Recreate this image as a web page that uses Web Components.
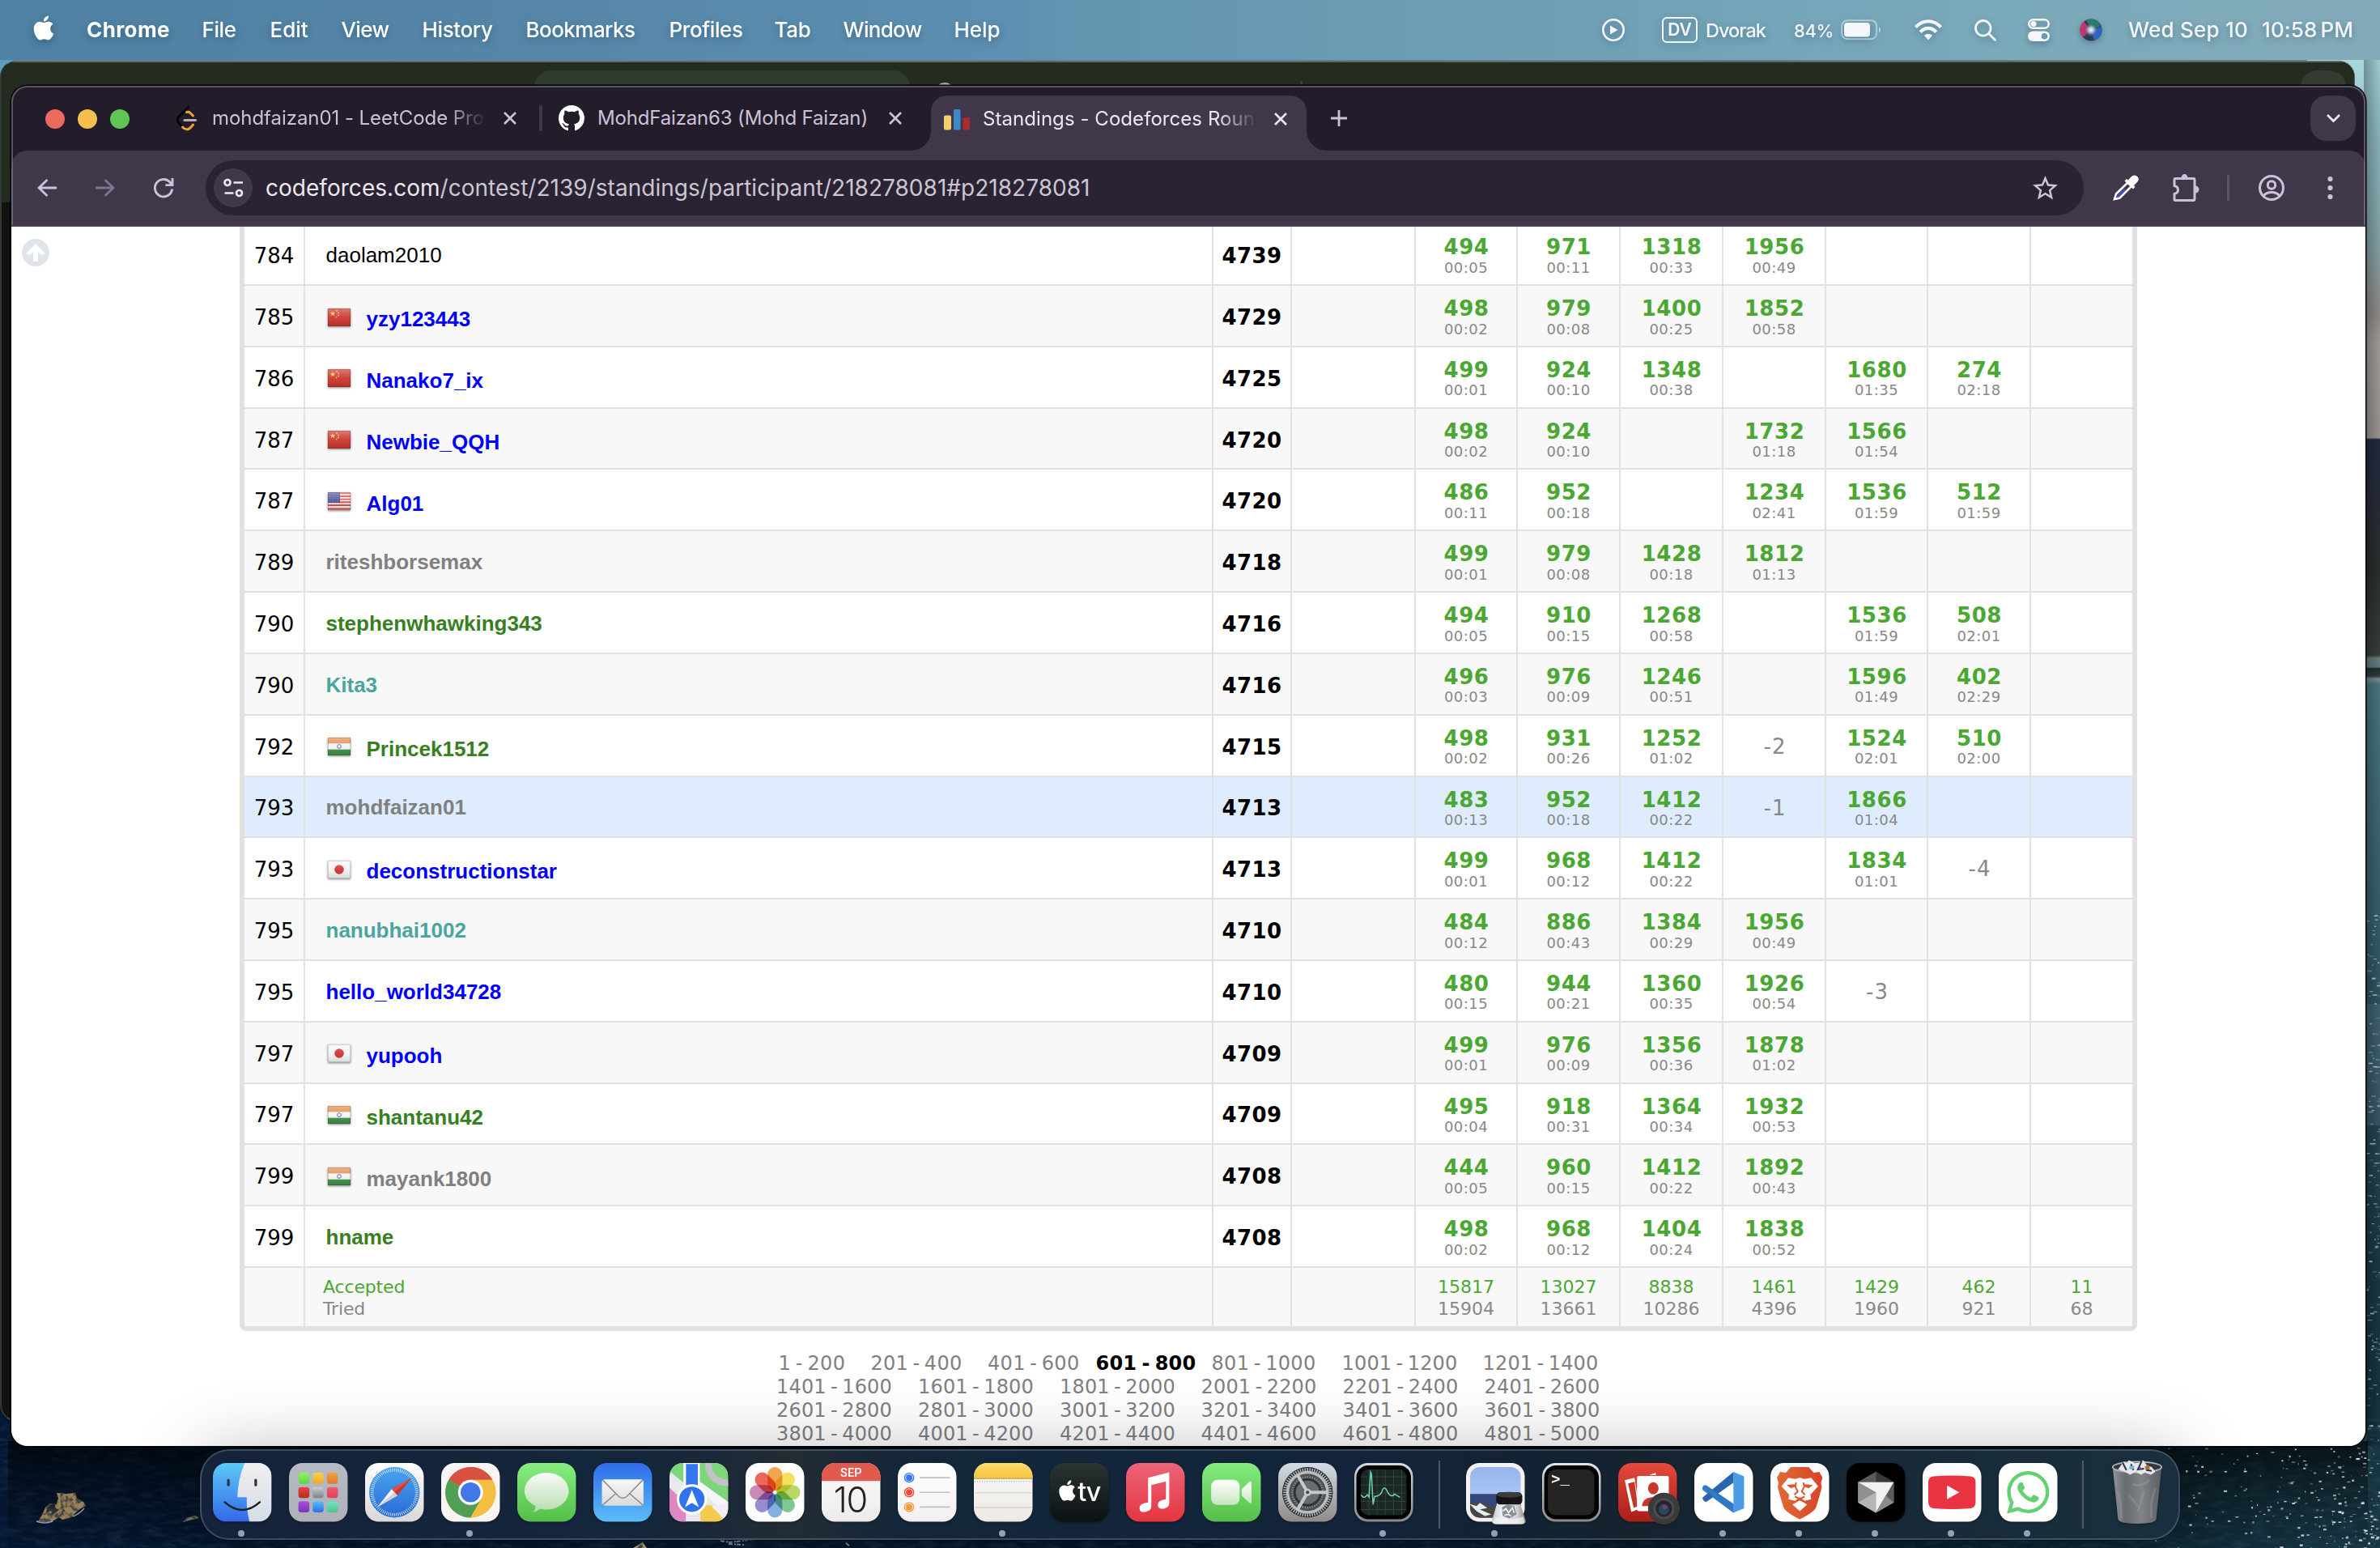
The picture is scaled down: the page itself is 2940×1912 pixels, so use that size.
<!DOCTYPE html>
<html lang="en">
<head>
<meta charset="utf-8">
<title>Standings - Codeforces Round</title>
<style>
html,body{margin:0;padding:0;width:2940px;height:1912px;overflow:hidden;background:#04142a}
body{font-family:Inter,"Liberation Sans",sans-serif}
</style>
</head>
<body>
<mac-desktop></mac-desktop>
<script>
function define(name, html, setup){
  customElements.define(name, class extends HTMLElement{
    connectedCallback(){
      if(this.shadowRoot) return;
      const root=this.attachShadow({mode:'open'});
      root.innerHTML=typeof html==='function'?html(this):html;
      if(setup) setup(this,root);
    }
  });
}

/* Text run that spreads its letter spacing to fill a given width */
define('fit-text','<style>:host{display:inline-block;white-space:pre;flex:none}</style><slot></slot>',el=>{
  const w=+el.getAttribute('w'), box=el.getAttribute('box');
  const nat=el.getBoundingClientRect().width, n=el.textContent.length;
  if(w) el.style.letterSpacing=((w+2-nat)/n).toFixed(3)+'px';
  if(box) el.style.width=box+'px';
});

/* Wallpaper */
define('wall-paper',()=>{
  let seed=7; const r=()=>(seed=(seed*16807)%2147483647)/2147483647;
  let s='';
  for(let i=0;i<230;i++){
    const x=2660+280*Math.sqrt(r()), y=1788+r()*124, w=1+r()*3.4;
    s+=`<rect x="${x.toFixed(1)}" y="${y.toFixed(1)}" width="${w.toFixed(1)}" height="${(1+r()*1.6).toFixed(1)}" fill="#dfe9ee" opacity="${(.25+r()*.7).toFixed(2)}"/>`;
  }
  for(let i=0;i<150;i++){
    const y=1130+Math.pow(r(),1.1)*660, x=2923+r()*17;
    s+=`<rect x="${x.toFixed(1)}" y="${y.toFixed(1)}" width="${(1+r()*5).toFixed(1)}" height="${(1+r()).toFixed(1)}" fill="#c5d3da" opacity="${(.2+r()*.5).toFixed(2)}"/>`;
  }
  return `<style>:host{display:block;width:2940px;height:1912px}svg{display:block}</style>
<svg width="2940" height="1912" viewBox="0 0 2940 1912">
<defs>
<linearGradient id="side" x1="0" y1="74" x2="0" y2="1912" gradientUnits="userSpaceOnUse">
<stop offset="0" stop-color="#a8d8df"/><stop offset=".05" stop-color="#8fbcc4"/><stop offset=".12" stop-color="#88a9ad"/><stop offset=".17" stop-color="#948f8d"/><stop offset=".19" stop-color="#a8a19f"/><stop offset=".254" stop-color="#a09a96"/>
<stop offset=".255" stop-color="#232c42"/><stop offset=".3" stop-color="#272d38"/><stop offset=".34" stop-color="#2a302f"/><stop offset=".4" stop-color="#3a403b"/><stop offset=".402" stop-color="#6d847f"/><stop offset=".408" stop-color="#5e7f88"/><stop offset=".409" stop-color="#252c2d"/><stop offset=".414" stop-color="#33403f"/><stop offset=".416" stop-color="#7d9498"/><stop offset=".42" stop-color="#4b7b85"/><stop offset=".55" stop-color="#3c6671"/><stop offset=".66" stop-color="#2d515e"/><stop offset=".8" stop-color="#1b3a47"/><stop offset="1" stop-color="#11303c"/></linearGradient>
<linearGradient id="sea" x1="0" x2="1" y1="0" y2="0"><stop offset="0" stop-color="#041631"/><stop offset=".3" stop-color="#041830"/><stop offset=".7" stop-color="#061b2d"/><stop offset=".9" stop-color="#0d2835"/><stop offset="1" stop-color="#173744"/></linearGradient>
<linearGradient id="shade" x1="0" x2="0" y1="0" y2="1"><stop offset="0" stop-color="#000" stop-opacity=".68"/><stop offset=".45" stop-color="#000" stop-opacity=".34"/><stop offset="1" stop-color="#000" stop-opacity=".06"/></linearGradient>
<linearGradient id="edge" x1="0" x2="1" y1="0" y2="0"><stop offset="0" stop-color="#000" stop-opacity=".32"/><stop offset="1" stop-color="#000" stop-opacity=".06"/></linearGradient>
<filter id="water" x="0" y="0" width="100%" height="100%"><feTurbulence type="fractalNoise" baseFrequency=".045 .16" numOctaves="4" seed="4"/><feColorMatrix values="0 0 0 0 .18  0 0 0 0 .36  0 0 0 0 .48  .9 0 0 0 -.36"/></filter>
<filter id="rock" x="0" y="0" width="100%" height="100%"><feTurbulence type="fractalNoise" baseFrequency=".16" numOctaves="3" seed="9" result="n"/><feColorMatrix in="n" values="0 0 0 0 .06  0 0 0 0 .06  0 0 0 0 .07  5 0 0 0 -2.2" result="m"/><feComposite in="m" in2="SourceGraphic" operator="in" result="c"/><feMerge><feMergeNode in="SourceGraphic"/><feMergeNode in="c"/></feMerge></filter>
</defs>
<rect width="2940" height="80" fill="#5b92b2"/>
<rect x="2850" y="74" width="90" height="1720" fill="url(#side)"/>
<rect x="2920" y="1240" width="20" height="150" fill="#a4b3c4" opacity=".16"/>
<rect x="2920" y="74" width="20" height="1720" fill="url(#edge)"/>
<rect y="1690" width="2924" height="222" fill="url(#sea)"/><rect x="2920" y="1786" width="20" height="126" fill="#16343f"/>
<rect y="1750" width="2940" height="162" filter="url(#water)" opacity=".34"/>
<rect x="10" y="1780" width="2915" height="132" fill="url(#shade)"/>
<rect x="0" y="74" width="14" height="60" fill="#5c9fc3"/>
<g filter="url(#rock)"><path fill="#9a8254" d="M47 1879l5-8 4-9 6-5 8 1 2-8-2-6 12 1 11-1 2 7 8 4 3 5-9 5-9 9-11 3-4-3-8 5-9 1z"/><path fill="#7f7a68" d="M226 1880l5-5 10-3 5 3-9 2z"/><path fill="#c0ab84" d="M782 1912l7-4 5-3 5 7z"/></g>
<path fill="#0a1426" d="M58 1862l11-8-1 8 5 3-8 6-2-5-6 3z" opacity=".75"/>
<path d="M45 1879q10 4 20 0M90 1873q8-3 14-10" stroke="#c8d6dc" stroke-width="1.400" fill="none" opacity=".7"/>
<path d="M890 1903l12 2 14-2 18-2M900 1907l20 1M1045 1906l5 4" stroke="#9eb0b7" stroke-width="2" stroke-dasharray="5 2 2 1" fill="none" opacity=".8"/>
${s}</svg>`});

/* Menu bar */
const APPLE='M12.152 6.896c-.948 0-2.415-1.078-3.96-1.04-2.04.027-3.91 1.183-4.961 3.014-2.117 3.675-.546 9.103 1.519 12.09 1.013 1.454 2.208 3.09 3.792 3.039 1.52-.065 2.09-.987 3.935-.987 1.831 0 2.35.987 3.96.948 1.637-.026 2.676-1.48 3.676-2.948 1.156-1.688 1.636-3.325 1.662-3.415-.039-.013-3.182-1.221-3.22-4.857-.026-3.04 2.48-4.494 2.597-4.559-1.429-2.09-3.623-2.324-4.39-2.376-2-.156-3.675 1.09-4.61 1.09zM15.53 3.83c.843-1.012 1.4-2.427 1.245-3.83-1.207.052-2.662.805-3.532 1.818-.78.896-1.454 2.338-1.273 3.714 1.338.104 2.715-.688 3.559-1.701';
define('menu-bar',`<style>
:host{display:flex;align-items:center;width:2940px;height:74px;color:#fff;font-size:26px;line-height:32px;font-weight:500;background:linear-gradient(90deg,#4e81a3 0,#5586a7 22%,#5c8fb1 42%,#6296af 46%,#6d9eb5 62%,#7baabb 85%,#82abba 100%)}
svg{display:block;flex:none;overflow:visible}
.l,.r{display:flex;align-items:center;height:74px;filter:drop-shadow(0 3px 4px rgba(0,30,60,.3))}
.l{padding-left:39px;flex:1}
.l svg{margin-right:38px;margin-top:-5px}
b{font-weight:700}
.r{color:#f3f7f9;margin-right:2px}
.dv{box-sizing:border-box;width:44px;height:32px;border:2.5px solid #f3f7f9;border-radius:6px;font-size:21px;line-height:27px;text-align:center;font-weight:600;margin-left:46px;margin-right:10px}
.s{font-size:22px;margin-top:2px}.d{font-size:23.5px;margin-top:2px}.t{margin-top:-1px}
</style>
<div class="l"><svg width="30" height="31" viewBox="0 0 24 24" fill="#fff"><path d="${APPLE}"/></svg>
<b style="display:flex"><fit-text w="101" box="142.5">Chrome</fit-text></b><fit-text w="40" box="84">File</fit-text><fit-text w="45" box="88">Edit</fit-text><fit-text w="57" box="100">View</fit-text><fit-text w="85" box="128">History</fit-text><fit-text w="133" box="177">Bookmarks</fit-text><fit-text w="89" box="130">Profiles</fit-text><fit-text w="43" box="85">Tab</fit-text><fit-text w="95" box="137">Window</fit-text><fit-text w="55">Help</fit-text></div>
<div class="r">
<svg width="28" height="28" viewBox="0 0 28 28"><circle cx="14" cy="14" r="12.7" fill="none" stroke="#f3f7f9" stroke-width="2.6"/><path d="M10 8.4l9.5 5.6-9.5 5.6z" fill="#f3f7f9"/></svg>
<div class="dv">DV</div><fit-text class="d" w="72" box="109">Dvorak</fit-text><fit-text class="s" w="47" box="58">84%</fit-text>
<svg width="52" height="26" viewBox="0 0 52 26"><rect x="1.2" y="1.2" width="43" height="23" rx="7" fill="none" stroke="#f3f7f9" stroke-opacity=".5" stroke-width="2"/><rect x="4" y="4" width="32" height="17.5" rx="4" fill="#f3f7f9"/><path d="M47 9q4 4 0 8z" fill="#f3f7f9" opacity=".6"/></svg>
<svg style="margin-left:39px" width="34" height="26" viewBox="0 0 34 26" fill="none" stroke="#f3f7f9" stroke-width="4.2"><path d="M1.5 9.6C10-.2 24-.2 32.500 9.600"/><path d="M7.200 15.600c5.500-6.200 14.100-6.200 19.600 0"/><path d="M17 25.400l-5-5.600q5-4.200 10 0z" fill="#f3f7f9" stroke="none"/></svg>
<svg style="margin-left:40px" width="27" height="27" viewBox="0 0 27 27" fill="none" stroke="#f3f7f9" stroke-width="2.8"><circle cx="10.800" cy="10.800" r="9.300"/><path d="M17.600 17.600l8 8" stroke-linecap="round"/></svg>
<svg style="margin-left:39px" width="27" height="28" viewBox="0 0 27 28"><rect x="1.200" y="1.200" width="24.600" height="10.600" rx="5.300" fill="none" stroke="#f3f7f9" stroke-width="2.400"/><circle cx="7" cy="6.500" r="3.600" fill="#f3f7f9"/><rect x="0" y="15.500" width="27" height="12.500" rx="6.200" fill="#f3f7f9"/><circle cx="20.500" cy="21.700" r="3.800" fill="#6c98a8"/></svg>
<svg style="margin-left:37px;margin-right:32px" width="28" height="28" viewBox="0 0 28 28"><defs><radialGradient id="si" cx=".5" cy=".5" r=".5"><stop offset="0" stop-color="#fff"/><stop offset=".4" stop-color="#b6cdee" stop-opacity=".8"/><stop offset="1" stop-color="#334" stop-opacity="0"/></radialGradient></defs><circle cx="14" cy="14" r="13.500" fill="#303a55"/><path d="M14 14L5 3.500A13.500 13.500 0 0 0 4 23z" fill="#c2356e"/><path d="M14 14L8 2A13.500 13.500 0 0 1 26 9z" fill="#277e6b"/><path d="M14 14l12.500-4A13.500 13.500 0 0 1 18 27z" fill="#2f63c4"/><circle cx="14" cy="14" r="9" fill="url(#si)"/></svg>
<fit-text class="t" w="146" box="165">Wed Sep 10</fit-text><fit-text class="t" w="111" box="144" style="word-spacing:-3px">10:58 PM</fit-text>
</div>`);

/* Browser chrome */
define('x-mark','<style>:host{display:block;flex:none;width:16px;height:16px}svg{display:block}</style><svg width="16" height="16" viewBox="0 0 16 16" fill="none" stroke="currentColor" stroke-width="2.600"><path d="M1 1l14 14M15 1L1 15"/></svg>');
const GH='M8 0C3.58 0 0 3.58 0 8c0 3.54 2.29 6.53 5.47 7.59.4.07.55-.17.55-.38 0-.19-.01-.82-.01-1.49-2.01.37-2.53-.49-2.69-.94-.09-.23-.48-.94-.82-1.13-.28-.15-.68-.52-.01-.53.63-.01 1.08.58 1.23.82.72 1.21 1.87.87 2.33.66.07-.52.28-.87.51-1.07-1.78-.2-3.64-.89-3.64-3.95 0-.87.31-1.59.82-2.15-.08-.2-.36-1.02.08-2.12 0 0 .67-.21 2.2.82.64-.18 1.32-.27 2-.27s1.36.09 2 .27c1.53-1.04 2.2-.82 2.2-.82.44 1.1.16 1.92.08 2.12.51.56.82 1.27.82 2.15 0 3.07-1.87 3.75-3.65 3.95.29.25.54.73.54 1.48 0 1.07-.01 1.93-.01 2.2 0 .21.15.46.55.38A8.01 8.01 0 0 0 16 8c0-4.42-3.58-8-8-8z';
define('tab-strip',`<style>
:host{display:flex;box-sizing:border-box;height:80px;background:#231c2b;color:#cdc1d8;font-size:24px;line-height:30px;padding-left:42px}
svg{display:block;flex:none;overflow:visible}
.lights{display:flex;gap:16px;align-items:center;height:82px;width:104px}
.lights i{width:24px;height:24px;border-radius:50%}
.tab{display:flex;align-items:center;height:80px;box-sizing:border-box}
.fade{-webkit-mask-image:linear-gradient(90deg,#000 calc(100% - 50px),transparent calc(100% - 1px));mask-image:linear-gradient(90deg,#000 calc(100% - 50px),transparent calc(100% - 1px))}
.sep{width:4px;height:32px;border-radius:2px;background:#41374a;align-self:center}
.act{position:relative;color:#ece5f2;background:#41374a;height:68px;margin-top:12px;border-radius:20px 20px 0 0;width:464px;padding:0 24px 10px 16px;margin-left:36px}
.act:before,.act:after{content:"";position:absolute;bottom:0;width:24px;height:24px}
.act:before{left:-24px;background:radial-gradient(circle at 0 0,transparent 23.500px,#41374a 24px)}
.act:after{right:-24px;background:radial-gradient(circle at 100% 0,transparent 23.500px,#41374a 24px)}
.more{display:flex;align-items:center;justify-content:center;width:56px;height:56px;border-radius:20px;background:#41374a;margin:12px 12px 0 auto}
</style>
<div class="lights"><i style="background:#ec6a5e"></i><i style="background:#f4bf4f"></i><i style="background:#61c554"></i></div>
<div class="tab" style="margin-left:57px">
<svg width="27" height="32" viewBox="0 0 27 32" fill="none" stroke-linecap="round"><path d="M16 2L3.500 14.500Q1 18 3.500 21.500L8.500 27" stroke="#050405" stroke-width="3"/><path d="M13.500 8.500q3-1 4.500 1l3.500 3.500M8.500 27q3 3.500 7 2.500 2.500-1 6-5.500" stroke="#eda137" stroke-width="3"/><path d="M11 18.500h13.500" stroke="#b3b1b0" stroke-width="3.200"/></svg>
<div class="fade" style="width:340px;margin-left:18px"><fit-text w="334">mohdfaizan01 - LeetCode Pro</fit-text></div><x-mark style="margin-left:20px"></x-mark></div>
<div class="sep" style="margin-left:28px"></div>
<div class="tab" style="margin-left:20px"><svg width="32" height="32" viewBox="0 0 16 16" fill="#fff"><path d="${GH}"/></svg><fit-text w="332" box="360" style="margin-left:16px">MohdFaizan63 (Mohd Faizan)</fit-text><x-mark></x-mark></div>
<div class="tab act"><svg width="32" height="26" viewBox="0 0 32 26" style="margin-top:2px"><rect y="7.500" width="9" height="18" rx="2" fill="#f3cf69"/><rect x="12" y="0" width="8.500" height="25.500" rx="2" fill="#3f89c9"/><rect x="23.500" y="10" width="8.500" height="15.500" rx="2" fill="#ab2a2b"/></svg>
<div class="fade" style="width:340px;margin-left:16px"><fit-text w="334">Standings - Codeforces Roun</fit-text></div><x-mark style="margin-left:20px"></x-mark></div>
<svg style="margin:30px 0 0 30px" width="20" height="20" viewBox="0 0 20 20" stroke="#cdc1d8" stroke-width="2.800"><path d="M10 0v20M0 10h20"/></svg>
<div class="more"><svg width="17" height="10" viewBox="0 0 17 10" fill="none" stroke="#ece5f2" stroke-width="2.800"><path d="M1 1l7.500 7.500L16 1"/></svg></div>`);

define('tool-bar',`<style>
:host{display:flex;align-items:center;box-sizing:border-box;height:94px;background:#41374a;border-bottom:2px solid #4b454f;padding-left:20px;color:#cdc1d8;border-radius:20px 20px 0 0}
.b{flex:none;width:48px;height:48px;display:flex;align-items:center;justify-content:center}
svg{display:block;overflow:visible}
.omni{flex:none;display:flex;align-items:center;box-sizing:border-box;width:2320px;height:68px;border-radius:34px;background:#2a2334;margin-left:28px;padding:0 24px 0 10px}
.site{background:#41374a;border-radius:50%;margin-right:16px}
.url{font-size:28px;line-height:34px;color:#cbc6cf;flex:1}.url b{font-weight:400;color:#ece7ef}
.sep{width:3px;height:32px;border-radius:2px;background:#5f556a;margin-left:27px}
</style>
<div class="b"><svg width="24" height="22" viewBox="0 0 24 22" fill="none" stroke="#cdc1d8" stroke-width="2.800"><path d="M24 11H2M12.500 1L2 11l10.500 10"/></svg></div>
<div class="b" style="margin-left:24px"><svg width="24" height="22" viewBox="0 0 24 22" fill="none" stroke="#7f748a" stroke-width="2.800"><path d="M0 11h22M11.500 1L22 11 11.500 21"/></svg></div>
<div class="b" style="margin-left:24px"><svg width="24" height="24" viewBox="0 0 24 24" fill="none" stroke="#cdc1d8" stroke-width="2.900"><path d="M22.700 13.500A10.700 10.700 0 1 1 19.500 4.500L22 7.500M23 0v8.600h-8.600"/></svg></div>
<div class="omni"><div class="b site"><svg width="24" height="24" viewBox="0 0 24 24" fill="none" stroke="#ece7ef" stroke-width="2.700"><circle cx="5" cy="5.500" r="3.500"/><path d="M12.500 5.500H24M1.500 18.500h11"/><circle cx="19.500" cy="18.500" r="3.500"/></svg></div>
<div class="url"><fit-text w="1016.500"><b>codeforces.com</b>/contest/2139/standings/participant/218278081#p218278081</fit-text></div>
<div class="b"><svg width="37" height="37" viewBox="0 0 24 24" fill="#cdc6d2"><path d="M22 9.240l-7.190-.620L12 2 9.190 8.630 2 9.240l5.460 4.730L5.820 21 12 17.270 18.180 21l-1.630-7.030L22 9.240zM12 15.400l-3.760 2.270 1-4.280-3.320-2.880 4.380-.380L12 6.100l1.710 4.040 4.380.380-3.320 2.880 1 4.280L12 15.400z"/></svg></div></div>
<div class="b" style="margin-left:28px"><svg width="32" height="32" viewBox="0 0 32 32"><path d="M18.500 9.500L4 23.500l-2 6.500 6.500-1.500L23 14z" fill="#41374a" stroke="#fff" stroke-width="2.600"/><path d="M14 17L6 24.500l-.800 3 3-.800L17 18z" fill="#3c50c8"/><path d="M21.500 3.500q4-5 8-2t1 7l-4.500 4.500 1.500 2-2.500 2.500L14.500 7.500 17 5l2 1.500z" fill="#fff"/></svg></div>
<div class="b" style="margin-left:26px"><svg width="33" height="34" viewBox="0 0 33 34" fill="none" stroke="#cdc1d8" stroke-width="3"><path d="M2 31V24.500q4.500-1 4.500-5T2 14.500V7q0-1.500 1.500-1.500h22Q27 5.500 27 7v24q0 1.500-1.500 1.500H3.500Q2 32.500 2 31z"/><path d="M10.500 5a4 5 0 0 1 8 0zM28 14.500a4.500 4.500 0 0 1 0 9z" fill="#cdc1d8" stroke="none"/></svg></div>
<div class="sep"></div>
<div class="b" style="margin-left:28px"><svg width="32" height="32" viewBox="0 0 32 32" fill="none" stroke="#cdc1d8" stroke-width="3"><circle cx="16" cy="16" r="14.500"/><circle cx="16" cy="12.500" r="4.700"/><path d="M6 26q3.500-4.500 10-4.500T26 26"/></svg></div>
<div class="b" style="margin-left:24px"><svg width="7" height="28" viewBox="0 0 7 28" fill="#cdc1d8"><circle cx="3.500" cy="3" r="3.100"/><circle cx="3.500" cy="14" r="3.100"/><circle cx="3.500" cy="25" r="3.100"/></svg></div>`);

/* Flags */
const FLAGS={
cn:'<rect width="28" height="22" fill="#cb332b"/><path d="M6 3l.900 2.200 2.300.100-1.800 1.500.600 2.300L6 7.800 4 9.100l.600-2.300-1.800-1.500 2.300-.100z" fill="#f6d34a"/><circle cx="11" cy="3" r=".9" fill="#eab54a"/><circle cx="13" cy="5.500" r=".9" fill="#eab54a"/><circle cx="13" cy="8.500" r=".9" fill="#eab54a"/><circle cx="10.500" cy="10.500" r=".9" fill="#eab54a"/>',
us:'<rect width="28" height="22" fill="#f6eeee"/><path d="M0 1.300h28M0 5h28M0 8.600h28M0 12.300h28M0 16h28M0 20.500h28" stroke="#de4646" stroke-width="1.900"/><rect width="15" height="13" fill="#41478e"/><path d="M1 2h13M1 5h13M1 8h13M1 11h13" stroke="#a4a8cf" stroke-width="1" stroke-dasharray="1 1.500"/>',
in:'<rect width="28" height="22" fill="#f4f4f4"/><rect width="28" height="7.300" fill="#e28a48"/><rect y="14.700" width="28" height="7.300" fill="#3d8f46"/><circle cx="14" cy="11" r="2.400" fill="none" stroke="#5a62a8" stroke-width="1"/>',
jp:'<rect width="28" height="22" fill="#f4f4f4"/><circle cx="14" cy="11" r="5.800" fill="#cf2d31"/>'};
define('country-flag',el=>`<style>:host{display:block;width:28px;height:22px;filter:drop-shadow(0 1px 1.500px rgba(0,0,0,.5))}svg{display:block}</style><svg width="28" height="22" viewBox="0 0 28 22"><defs><linearGradient id="g" x2="0" y2="1"><stop offset="0" stop-color="#fff" stop-opacity=".35"/><stop offset=".5" stop-color="#fff" stop-opacity=".08"/><stop offset="1" stop-color="#000" stop-opacity=".12"/></linearGradient></defs>${FLAGS[el.getAttribute('code')]}<rect width="28" height="22" fill="url(#g)"/><rect x=".5" y=".5" width="27" height="21" fill="none" stroke="#000" stroke-opacity=".14"/></svg>`);

/* Standings */
define('problem-cell',el=>{
  const p=el.getAttribute('p')||'', t=el.getAttribute('t')||'';
  return `<style>:host{display:block;box-sizing:border-box;text-align:center;border-right:2px solid #e1e1e1}
.p{font-weight:700;font-size:26px;line-height:30px;color:#4aa832;padding:13px 0 0 1px;letter-spacing:.55px}
.t{font-size:18px;line-height:22px;color:#888;letter-spacing:.45px;margin-top:-.500px}
.n{font-size:26px;line-height:30px;color:#888;padding:23px 0 0 2px;letter-spacing:1px}
.f{font-size:22px;line-height:27px;padding-top:9.600px;color:#888}.f span{color:#4aa832}</style>`+
  (el.hasAttribute('total')?`<div class="f"><span>${p}</span><br>${t}</div>`:!p?'':t?`<div class="p">${p}</div><div class="t">${t}</div>`:`<div class="n">${p}</div>`);
});
const ROWS=[
['784','','daolam2010','#000','4739','494 00:05','971 00:11','1318 00:33','1956 00:49'],
['785','cn','yzy123443','#00f','4729','498 00:02','979 00:08','1400 00:25','1852 00:58'],
['786','cn','Nanako7_ix','#00f','4725','499 00:01','924 00:10','1348 00:38','','1680 01:35','274 02:18'],
['787','cn','Newbie_QQH','#00f','4720','498 00:02','924 00:10','','1732 01:18','1566 01:54'],
['787','us','Alg01','#00f','4720','486 00:11','952 00:18','','1234 02:41','1536 01:59','512 01:59'],
['789','','riteshborsemax','#808080','4718','499 00:01','979 00:08','1428 00:18','1812 01:13'],
['790','','stephenwhawking343','#368021','4716','494 00:05','910 00:15','1268 00:58','','1536 01:59','508 02:01'],
['790','','Kita3','#4aa69c','4716','496 00:03','976 00:09','1246 00:51','','1596 01:49','402 02:29'],
['792','in','Princek1512','#368021','4715','498 00:02','931 00:26','1252 01:02','-2','1524 02:01','510 02:00'],
['793','','mohdfaizan01','#808080','4713','483 00:13','952 00:18','1412 00:22','-1','1866 01:04'],
['793','jp','deconstructionstar','#00f','4713','499 00:01','968 00:12','1412 00:22','','1834 01:01','-4'],
['795','','nanubhai1002','#4aa69c','4710','484 00:12','886 00:43','1384 00:29','1956 00:49'],
['795','','hello_world34728','#00f','4710','480 00:15','944 00:21','1360 00:35','1926 00:54','-3'],
['797','jp','yupooh','#00f','4709','499 00:01','976 00:09','1356 00:36','1878 01:02'],
['797','in','shantanu42','#368021','4709','495 00:04','918 00:31','1364 00:34','1932 00:53'],
['799','in','mayank1800','#808080','4708','444 00:05','960 00:15','1412 00:22','1892 00:43'],
['799','','hname','#368021','4708','498 00:02','968 00:12','1404 00:24','1838 00:52']];
const TOTAL=['15817 15904','13027 13661','8838 10286','1461 4396','1429 1960','462 921','11 68'];
define('standings-table',()=>{
  const cells=(a,x='')=>[0,1,2,3,4,5,6].map(i=>{const [p,t]=(a[i]||'').split(' ');return `<problem-cell ${x} p="${p||''}" t="${t||''}"${i==6?' style="border-right:0"':''}></problem-cell>`}).join('');
  return `<style>
:host{display:block;box-sizing:border-box;width:2344px;border:6px solid #e1e1e1;border-top:0;border-radius:0 0 8px 8px;font-family:"DejaVu Sans",Verdana,sans-serif;font-size:26px;color:#000;background:#fff}
.row{display:grid;grid-template-columns:75px 1122px 97px 153px 126px 127px 127px 127px 126px 127px 125px;box-sizing:border-box;height:75.8125px;border-bottom:2px solid #e1e1e1}
.row:nth-of-type(even){background:#f8f8f8}
.row.me{background:#deecfd}
.foot{height:72px;border-bottom:0;background:#f8f8f8!important}
.c{box-sizing:border-box;border-right:2px solid #e1e1e1;display:flex;align-items:center;justify-content:center;padding-top:4px}
.name{justify-content:flex-start;padding:1.500px 0 0 25.500px;font:26px/32px "Liberation Sans",Arial,sans-serif}
.name b{font-weight:700}.name.fl{padding-left:28px}
.fl country-flag{margin-right:19.500px;margin-top:2px}.fl b{padding-top:7px}
.sc{font-weight:700;letter-spacing:.4px}
.c.lab{display:block;font-size:22px;line-height:27px;padding:9.600px 0 0 22px;color:#888;letter-spacing:-.150px}.lab span{color:#4aa832}
</style>`+ROWS.map((r,i)=>`<div class="row${i==9?' me':''}"><div class="c">${r[0]}</div><div class="c name${r[1]?' fl':''}">${r[1]?`<country-flag code="${r[1]}"></country-flag>`:''}${i?`<b style="color:${r[3]}">${r[2]}</b>`:`<span>${r[2]}</span>`}</div><div class="c sc">${r[4]}</div><div class="c"></div>${cells(r.slice(5))}</div>`).join('')+
`<div class="row foot"><div class="c"></div><div class="c lab"><span>Accepted</span><br>Tried</div><div class="c"></div><div class="c"></div>${cells(TOTAL,'total')}</div>`;
});

define('page-links',()=>{
  const line=(s,w,gap,x)=>`<div style="padding-left:${x}px">`+s.map((t,i)=>`<fit-text w="${w[i]}" box="${gap[i]}"${t=='601 - 800'?' class="on"':''}>${t}</fit-text>`).join('')+'</div>';
  const W=[141,141,141,141,141,141], G=[175,175,174.500,175,175,150];
  const seq=n=>[0,1,2,3,4,5].map(i=>`${n+i*200} - ${n+i*200+199}`);
  return `<style>:host{display:block;font-family:"DejaVu Sans",Verdana,sans-serif;font-size:24px;line-height:29px;color:#808080}div{display:flex;height:29px}fit-text{word-spacing:-2.500px}.on{font-weight:700;color:#000}</style>`+
  line(['1 - 200','201 - 400','401 - 600','601 - 800','801 - 1000','1001 - 1200','1201 - 1400'],[81,111,111.500,122,127,141,141],[114,144.500,133.500,143,161,174,150],947.500)+
  line(seq(1401),W,G,945)+line(seq(2601),W,G,945)+line(seq(3801),W,G,945);
});

/* Browser windows */
define('browser-window',`<style>
:host{display:block;box-sizing:border-box;width:2908px;height:1680px;border-radius:20px;overflow:hidden;background:#231c2b}
</style><tab-strip></tab-strip><tool-bar></tool-bar><slot></slot>`);
define('contest-page',`<style>:host{display:flex;height:1506px;background:#fff;overflow:hidden}svg{display:block}.up{width:34px;margin:15px 235px 0 13px;flex:none}.main{width:2344px;flex:none}standings-table{margin-top:-2.800px}page-links{margin:25.500px 0 0 -282px}</style>
<div class="up"><svg width="34" height="34" viewBox="0 0 34 34"><circle cx="17" cy="17" r="17" fill="#dfe3ea"/><path d="M17 6l12 12-4 2-5-3.500V28h-6V16.500L9 20l-4-2z" fill="#fff"/></svg></div>
<div class="main"><standings-table></standings-table><page-links></page-links></div>`);
define('back-window',`<style>
:host{display:block;box-sizing:border-box;width:2909px;height:1680px;border-radius:20px;overflow:hidden;background:#111;border:1.500px solid #5b5f58;border-left:2px solid #333a33}
.s{height:174px;background:#242b21;display:flex;align-items:flex-start;border-top:1px solid #70705f;box-sizing:border-box}
.t{width:464px;height:60px;margin:10px 0 0 658px;background:#2f3b2b;border-radius:20px 20px 0 0}
.m{width:56px;height:56px;border-radius:20px;background:#353a33;margin:10px 10px 0 auto}
.f{width:18px;height:12px;border-radius:50%;background:#a4b39f;margin:25px 0 0 34px}
.g{width:3px;height:12px;background:#3a4236;margin:23px 0 0 430px}
</style><div class="s"><div class="t"></div><div class="f"></div><div class="g"></div><div class="m"></div></div>`);

/* Dock icons, drawn on a 72 x 72 grid */
const sq=(f,e='')=>`<rect width="72" height="72" rx="16.500" fill="${f}" ${e}/>`;
const grad=(id,a,b)=>`<linearGradient id="${id}" x2="0" y2="1"><stop offset="0" stop-color="${a}"/><stop offset="1" stop-color="${b}"/></linearGradient>`;
const ticks=(n,r1,r2,c,w)=>{let d='';for(let i=0;i<n;i++){const a=i*2*Math.PI/n;d+=`M${(36+r1*Math.cos(a)).toFixed(1)} ${(36+r1*Math.sin(a)).toFixed(1)}L${(36+r2*Math.cos(a)).toFixed(1)} ${(36+r2*Math.sin(a)).toFixed(1)}`}return `<path d="${d}" stroke="${c}" stroke-width="${w}"/>`};
const ICONS={
finder:`<defs>${grad('a','#5ccaf9','#3468ea')}${grad('b','#f2eff0','#d3dce8')}<clipPath id="c"><rect width="72" height="72" rx="16.500"/></clipPath></defs><g clip-path="url(#c)"><rect width="72" height="72" fill="url(#a)"/><path d="M39 0Q30.500 20 30 42h11.500Q41 58 45 72H72V0z" fill="url(#b)"/></g><path d="M19 21v6M52.500 21v6" stroke="#2d3238" stroke-width="3.200" stroke-linecap="round"/><path d="M14.500 48Q36 67 57.500 48" stroke="#1b1d22" stroke-width="2.400" fill="none" stroke-linecap="round"/>`,
launchpad:()=>{const c=[['#8ff267','#5fd447'],['#f5cf4b','#efa92f'],['#f0a23a','#e07b2c'],['#e8463a','#b32b20'],['#c9ced3','#7b7f84'],['#f25a6d','#e2405a'],['#a94fe0','#7c33b5'],['#55bcfa','#2f6fe0'],['#6fe3c0','#4fc48d']];return `<defs>${c.map((p,i)=>grad('l'+i,p[0],p[1])).join('')}${grad('bg','#b6bac2','#aeb1ba')}</defs>${sq('url(#bg)')}`+c.map((p,i)=>`<rect x="${11.500+(i%3)*17.500}" y="${12+Math.floor(i/3)*17.500}" width="13.500" height="13.500" rx="3.400" fill="url(#l${i})"/>`).join('')},
safari:()=>`<defs>${grad('a','#49a4ee','#2c6ad6')}${grad('b','#fefefe','#d8d8d8')}</defs>${sq('url(#b)')}<circle cx="36" cy="36" r="31" fill="url(#a)"/>${ticks(72,25.500,29.500,'#d8ecfb',.9)}<path d="M57 18L39.500 40 32.500 32z" fill="#e44d42"/><path d="M57 18L39.500 40 36 36z" fill="#c33a35"/><path d="M15 54L32.500 32 39.500 40z" fill="#f4f4f4"/><path d="M15 54L36 36l3.500 4z" fill="#cdd3da"/>`,
chrome:`${sq('#f6f5f4')}<circle cx="36" cy="36" r="31" fill="#f2bf42"/><path d="M36 36L9.200 20.500A31 31 0 0 1 62.800 20.500z" fill="#d85140"/><path d="M9.200 20.500A31 31 0 0 0 36 67L49.500 43.500 36 36z" fill="#519e57"/><path d="M36 5A31 31 0 0 1 62.800 20.500H36z" fill="#d85140"/><path d="M49.500 43.500L36 67A31 31 0 0 0 62.800 20.500H36z" fill="#f2bf42"/><path d="M36 36L22.500 43.500 9.200 20.500z" fill="#519e57"/><circle cx="36" cy="36" r="15.300" fill="#fff"/><circle cx="36" cy="36" r="12.200" fill="#4277e6"/>`,
messages:`<defs>${grad('a','#85ee80','#55be48')}${grad('b','#f8fcf8','#b8dcae')}</defs>${sq('url(#a)')}<path d="M36 12c15 0 27 9.800 27 22.500S51 57 36 57q-4.500 0-8.500-1-3.500 3.500-8.500 4.500 3.500-3 3.500-7.500Q9 46 9 34.500C9 21.800 21 12 36 12z" fill="url(#b)"/>`,
mail:`<defs>${grad('a','#2f6ce9','#5bbdf8')}${grad('b','#f8f8f8','#dadada')}</defs>${sq('url(#a)')}<rect x="10.500" y="20" width="51" height="32.500" rx="3.500" fill="url(#b)"/><path d="M11.500 51.500L28 37M60.500 51.500L44 37M11.500 21L31 41q5 4.500 10 0L60.500 21" fill="none" stroke="#8d8d8d" stroke-width="1.500"/>`,
maps:`<defs><clipPath id="c"><rect width="72" height="72" rx="16.500"/></clipPath></defs><g clip-path="url(#c)"><rect width="72" height="72" fill="#e9e8ee"/><path d="M0 0h17v24L0 10zM36 0h36v48L36 22z" fill="#7ed67a"/><path d="M36 22l36 26v14L36 34z" fill="#f6f5f8"/><path d="M0 30l20 20v22H0z" fill="#dd88c4"/><path d="M38 52h14l16 20H38z" fill="#f3cb4b"/><path d="M52 54l20-6v24z" fill="#f1eff4"/><path d="M19 0h17v40H19z" fill="#3475f0" stroke="#fff" stroke-width="2.500"/><path d="M48 0a22 22 0 0 0 24 24" fill="none" stroke="#c3c2cb" stroke-width="8"/></g><circle cx="27.500" cy="44.500" r="17" fill="#3073ec" stroke="#fff" stroke-width="3"/><path d="M27.500 33l8.500 21-8.500-5-8.500 5z" fill="#fff"/>`,
photos:()=>sq('#fdfdfd')+['#f19a38','#f5dd4a','#b3d554','#6fc283','#74a7de','#8d7cc9','#c47bb0','#ea5345'].map((c,i)=>`<rect x="27" y="5" width="18" height="29" rx="9" fill="${c}" opacity=".88" style="mix-blend-mode:multiply" transform="rotate(${i*45} 36 36)"/>`).join(''),
calendar:`<defs>${grad('b','#fdfcfb','#ecebea')}</defs>${sq('url(#b)')}<path d="M0 22V16.500A16.500 16.500 0 0 1 16.500 0h39A16.500 16.500 0 0 1 72 16.500V22z" fill="#e2594e"/><text x="36" y="17" font-family="Roboto,sans-serif" font-size="14.500" font-weight="500" fill="#fff" text-anchor="middle">SEP</text><text x="35" y="61" font-family="Inter,sans-serif" font-size="43" font-weight="300" fill="#222" text-anchor="middle" letter-spacing="-1.500">10</text>`,
reminders:()=>`<defs>${grad('b','#ffffff','#f2f0ef')}</defs>${sq('url(#b)')}`+['#3478f6','#eb4d3d','#f19a37'].map((c,i)=>`<circle cx="14" cy="${18+i*18}" r="5.500" fill="none" stroke="${c}" stroke-width="1.400"/><circle cx="14" cy="${18+i*18}" r="3.900" fill="${c}"/><path d="M27 ${18+i*18}h37" stroke="#c2c1c1" stroke-width="1.600"/>`).join(''),
notes:`<defs>${grad('a','#fbdd6c','#f4c23a')}${grad('b','#fcfbf8','#ece9e3')}</defs>${sq('url(#b)')}<path d="M0 19V16.500A16.500 16.500 0 0 1 16.500 0h39A16.500 16.500 0 0 1 72 16.500V19z" fill="url(#a)"/><path d="M0 19h72" stroke="#b59a56"/><path d="M1 22.500h70" stroke="#aaa" stroke-width="1.500" stroke-dasharray="1 2"/><path d="M1 36.500h70M1 54.500h70" stroke="#cfccc6" stroke-width="1.200"/>`,
tv:`<defs>${grad('a','#2a3432','#0c1113')}</defs>${sq('url(#a)')}<g transform="translate(9 21) scale(1.020 1.060)" fill="#fff"><path d="${APPLE}"/></g><text x="34" y="47" font-family="Inter,sans-serif" font-weight="500" font-size="32" fill="#fff" letter-spacing="-1">tv</text>`,
music:`<defs>${grad('a','#ec6479','#e5353f')}</defs>${sq('url(#a)')}<path d="M27 18l26-6.500v38q0 5-6.500 6.500-7.500 1-7.500-4.500 0-5 6.500-6.300l3.500-.800V22.500L31 27v26.500q0 5-7 6.500-7.500 1-7.500-4.500 0-5 6.500-6.300l4-.900z" fill="#fff"/>`,
facetime:`<defs>${grad('a','#84ec7f','#57bd4a')}${grad('b','#ffffff','#c8e6c2')}</defs>${sq('url(#a)')}<rect x="11" y="20.500" width="35" height="31" rx="8" fill="url(#b)"/><path d="M48.500 32L58 23q2.500-1.500 2.500 1.500v23q0 3-2.500 1.500l-9.500-9z" fill="url(#b)"/>`,
settings:()=>`<defs>${grad('a','#d3dce5','#8e8b89')}</defs>${sq('url(#a)')}<circle cx="36" cy="36" r="31" fill="#26282b"/>${ticks(60,26,30,'#b6b9bc',1.500)}<circle cx="36" cy="36" r="24.500" fill="#4e5052" stroke="#b9bcc0" stroke-width="3.500"/>${ticks(40,17,20,'#8b8e91',1.300)}<circle cx="36" cy="36" r="16" fill="#696c6f" stroke="#303235" stroke-width="3"/><path d="M36 36h25M36 36L23.500 14.500M36 36L23.500 57.500" stroke="#c6c9cc" stroke-width="4"/><circle cx="36" cy="36" r="4.500" fill="#c6c9cc"/><circle cx="36" cy="36" r="2" fill="#444"/>`,
activity:`<defs>${grad('a','#cfdbe2','#8b8988')}</defs>${sq('url(#a)')}<rect x="2.500" y="3" width="67" height="66" rx="14.500" fill="#000"/><rect x="8" y="8" width="56" height="56" rx="9" fill="#1b2724"/><path d="M18 8v56M28 8v56M38 8v56M48 8v56M58 8v56M8 17h56M8 27h56M8 37h56M8 47h56M8 57h56" stroke="#31443f" stroke-width="1"/><path d="M8 39l3 3h2l3-3 2 3 2-31 1 2 2 38 2-10q4 0 6-2 2-1 4-7 3-3 5 2 2 5 5 6t4-2l7 4" fill="none" stroke="#6fd0b4" stroke-width="1.500"/>`,
preview:`<defs>${grad('a','#92b3ee','#c0d3f4')}<linearGradient id="g" x2="1" y2="0"><stop offset="0" stop-color="#c8c8c6"/><stop offset=".3" stop-color="#f0f2f3"/><stop offset=".75" stop-color="#cfd2d3"/><stop offset="1" stop-color="#85827d"/></linearGradient><clipPath id="c"><rect x="5" y="5" width="62" height="62" rx="12"/></clipPath></defs>${sq('#f3f2f0')}<g clip-path="url(#c)"><rect width="72" height="72" fill="url(#a)"/><path d="M0 38h72v34H0z" fill="#34477a"/><path d="M0 48q10 4 16-1l20 8 8 17H0z" fill="#4b4646"/><path d="M4 50l9 3 4-4 9 6-9 2 14 6-8 2-10-6z" fill="#e7edf3"/></g><path d="M39 46h26l8 24q1 5-5 5H37q-6 0-5-5z" fill="url(#g)"/><path d="M44 54l7-3 8 2 3 10-9 5-8-3z" fill="#8a8f94"/><path d="M45 59l4-3 3 5 5-6 2 6M47 64l5-1 3 2" stroke="#fff" fill="none" stroke-width="1.500"/><path d="M36 66q17 6 34 0l2 6q-1 3-4 3H37q-4 0-4-3z" fill="#f4f4f3" opacity=".7"/><rect x="37" y="36" width="32" height="15" rx="5" fill="#151515"/><ellipse cx="53" cy="39" rx="15" ry="3.500" fill="#3b3b3b"/>`,
terminal:`<defs>${grad('a','#dbe7ee','#8b8988')}</defs>${sq('url(#a)')}<rect x="2.500" y="3" width="67" height="66" rx="14.500" fill="#000"/><rect x="7" y="8" width="57" height="56" rx="9.500" fill="#242424"/><text x="11" y="26" font-family="'Liberation Mono',monospace" font-size="19" font-weight="700" fill="#fff">&gt;_</text>`,
booth:`<defs>${grad('a','#e6493b','#a81f18')}</defs>${sq('url(#a)')}<path d="M8 21l12-3 6 38-10 4z" fill="#fff"/><path d="M12 25l8-2 4 30-5 2z" fill="#c5362b"/><path d="M38 15l8-3v3z" fill="#fff"/><rect x="23" y="16" width="39" height="43" rx="2" fill="#fff"/><ellipse cx="43" cy="31" rx="6.500" ry="7.500" fill="#c9382d"/><path d="M29 53q1-11 14-11t14 11z" fill="#c9382d"/><circle cx="56" cy="56" r="19.500" fill="#3b3b3c"/><circle cx="56" cy="56" r="13" fill="#4c4c4e"/><circle cx="56" cy="56" r="10" fill="#26262a"/><circle cx="56" cy="57" r="6.500" fill="#2a4756"/><circle cx="57" cy="54" r="3" fill="#6c3f78"/>`,
vscode:`${sq('#fff')}<path d="M48 11l13 5.500v39L48 61z" fill="#4a9ce8"/><path d="M10 30q1-4 5-2.500L48 50v11L10 33z" fill="#3584d0"/><path d="M48 11v13L14.500 48q-4-1-4.500-5.500z" fill="#2a66ad"/><path d="M10 31l4.500-3.500L48 51v10z" fill="#3279c4"/>`,
brave:`<defs><linearGradient id="a" x2="1" y2="0"><stop offset="0" stop-color="#e06a33"/><stop offset="1" stop-color="#d9432b"/></linearGradient></defs>${sq('#fff')}<path d="M25 5h22l6 7 7-1 4 7-2 6 1 6q-4 15-7 24-2 6-20 15-18-9-20-15-3-9-7-24l1-6-2-6 4-7 7 1z" fill="url(#a)"/><path d="M22 18l8 1.500 6-1.500 6 1.500 8-1.500 8.500 10.500-9.500 10.500 1 5.500-8 2-6-4.500-6 4.500-8-2 1-5.500-9.500-10.500z" fill="#fff"/><path d="M36 46l9 5-9 8-9-8z" fill="#fff"/><path d="M20 27l9-1 2.500 2.500L25 31zM52 27l-9-1-2.500 2.500L47 31z" fill="#dc5530"/><path d="M31.500 24l-1 5 3 6-4 4M40.500 24l1 5-3 6 4 4M30 41l6 3 6-3" fill="none" stroke="#dc5530" stroke-width="2"/>`,
cursor:`${sq('#000')}<path d="M36 11l22 12.500v25L36 61 14 48.500v-25z" fill="#7a7a7a"/><path d="M36 11v12.500H14z" fill="#5a5a5a"/><path d="M36 11l22 12.500H36z" fill="#383838"/><path d="M14 23.500h44L36 61V36z" fill="#f1f1f1"/><path d="M36 36L14 23.500v25z" fill="#909090"/><path d="M14 48.500L36 36v25z" fill="#b5b5b5"/><path d="M58 23.500v25L36 61z" fill="#5a5a5a"/><path d="M36 61l12-21 10 8.500z" fill="#8a8a8a"/>`,
youtube:`${sq('#fff')}<path d="M13 16.500q23-2 46 0 6 1 6 7v25q0 6-6 7-23 2-46 0-6-1-6-7v-25q0-6 6-7z" fill="#ea3340"/><path d="M30 27.500l15 8.500-15 8.500z" fill="#fff"/>`,
whatsapp:`${sq('#fff')}<g transform="translate(10 10) scale(2.170)"><path fill="#65d072" d="M17.472 14.382c-.297-.149-1.758-.867-2.030-.967-.273-.099-.471-.148-.670.150-.197.297-.767.966-.940 1.164-.173.199-.347.223-.644.075-.297-.150-1.255-.463-2.390-1.475-.883-.788-1.480-1.761-1.653-2.059-.173-.297-.018-.458.130-.606.134-.133.298-.347.446-.520.149-.174.198-.298.298-.497.099-.198.050-.371-.025-.520-.075-.149-.669-1.612-.916-2.207-.242-.579-.487-.500-.669-.510-.173-.008-.371-.010-.570-.010-.198 0-.520.074-.792.372-.272.297-1.040 1.016-1.040 2.479 0 1.462 1.065 2.875 1.213 3.074.149.198 2.096 3.200 5.077 4.487.709.306 1.262.489 1.694.625.712.227 1.360.195 1.871.118.571-.085 1.758-.719 2.006-1.413.248-.694.248-1.289.173-1.413-.074-.124-.272-.198-.570-.347m-5.421 7.403h-.004a9.870 9.870 0 01-5.031-1.378l-.361-.214-3.741.982.998-3.648-.235-.374a9.860 9.860 0 01-1.510-5.260c.001-5.450 4.436-9.884 9.888-9.884 2.640 0 5.122 1.030 6.988 2.898a9.825 9.825 0 012.893 6.994c-.003 5.450-4.437 9.884-9.885 9.884m8.413-18.297A11.815 11.815 0 0012.050 0C5.495 0 .160 5.335.157 11.892c0 2.096.547 4.142 1.588 5.945L.057 24l6.305-1.654a11.882 11.882 0 005.683 1.448h.005c6.554 0 11.890-5.335 11.893-11.893a11.821 11.821 0 00-3.480-8.413Z"/></g>`,
trash:`<defs><linearGradient id="a" x2="1" y2="0"><stop offset="0" stop-color="#9a9ea1"/><stop offset=".25" stop-color="#6f7376"/><stop offset=".6" stop-color="#878b8e"/><stop offset="1" stop-color="#5f6366"/></linearGradient></defs><path d="M4 3l7 68q1 6 25 6t25-6l7-68z" fill="url(#a)" opacity=".93"/><path d="M11 35q5 20 4 36M60 30q-8 20-5 40M30 25q14 5 22-6M25 40l12 14M45 35l-8 26" stroke="#b0b4b7" stroke-width="3" opacity=".25" fill="none"/><ellipse cx="36" cy="3" rx="32" ry="7" fill="#34393d" stroke="#aeb2b5" stroke-width="2"/><path d="M11 6l7-10 5 2 2-4 8 4 6-1 5-3 5 7 6 2 5 6-6 4-8-3-5 3-7-4-7 4-7-4z" fill="#e4e8ea"/><path d="M17-3l5 10M28-1l3 8M42-5l-5 11 8-1M52-1l-3 8 6 1" stroke="#2f3336" stroke-width="2.200" fill="none"/><path d="M27 1l6 1-3 4-5-1z" fill="#63bcd0"/><path d="M46 2l5-2 2 5-6 2z" fill="#b46a35"/><path d="M39 1l3 5-4 1z" fill="#4a58a4"/>`
};
define('dock-icon',el=>{
  const n=el.getAttribute('app'), i=ICONS[n];
  return `<style>:host{display:flex;flex-direction:column;align-items:center;width:94px;flex:none;padding-top:14.500px}svg{display:block;overflow:visible;filter:drop-shadow(0 1px 1.500px rgba(0,0,0,.35))}i{width:8px;height:8px;border-radius:50%;background:#9fb0c4;margin:11px 2px 0 0;opacity:.9}</style><svg width="${n=='trash'?68:72.500}" height="72.500" viewBox="0 0 72 72">${typeof i==='function'?i():i}</svg>${el.hasAttribute('open')?'<i></i>':''}`;
});
define('mac-dock',()=>{
  const ic=s=>s.split(' ').map(a=>`<dock-icon app="${a.replace('*','')}"${a.endsWith('*')?' open':''}></dock-icon>`).join('');
  return `<style>:host{display:flex;box-sizing:border-box;width:2446px;height:112px;border:2px solid rgba(150,170,185,.3);border-radius:36px;background:linear-gradient(90deg,#15233a 0,#14263c 22%,#222c34 30%,#13263a 36%,#13243a 60%,#15232f 72%,#182a38 85%,#1a2f3d 100%);padding-left:3.300px;box-shadow:0 0 0 1px rgba(0,0,0,.4),0 8px 90px rgba(0,0,0,.3)}
.s{width:2px;height:84px;background:#4c5966;margin:12px 21px 0;flex:none}</style>`+ic('finder* launchpad safari chrome* messages mail maps photos calendar reminders notes* tv music facetime settings activity*')+'<div class="s"></div>'+ic('preview* terminal booth vscode* brave* cursor* youtube* whatsapp*')+'<div class="s" style="margin-left:20px;margin-right:19px"></div>'+ic('trash');
});

define('mac-desktop',`<style>
:host{display:block;position:relative;width:2940px;height:1912px;overflow:hidden;font-family:Inter,"Liberation Sans",sans-serif}
wall-paper,menu-bar,back-window,.win,mac-dock{position:absolute}
wall-paper,menu-bar{left:0;top:0}
back-window{left:0;top:75px}
.win{left:14px;top:106px;border-radius:20px;box-shadow:0 0 0 1.500px #000}
.rim{position:absolute;left:14px;top:106px;width:2908px;height:172px;box-sizing:border-box;border:2px solid rgba(160,155,170,.45);border-bottom:0;border-radius:20px 20px 0 0}
mac-dock{left:247px;top:1790px}
</style><wall-paper></wall-paper><menu-bar></menu-bar><back-window></back-window>
<div class="win"><browser-window><contest-page></contest-page></browser-window></div><div class="rim"></div><mac-dock></mac-dock>`);
</script>
</body>
</html>
